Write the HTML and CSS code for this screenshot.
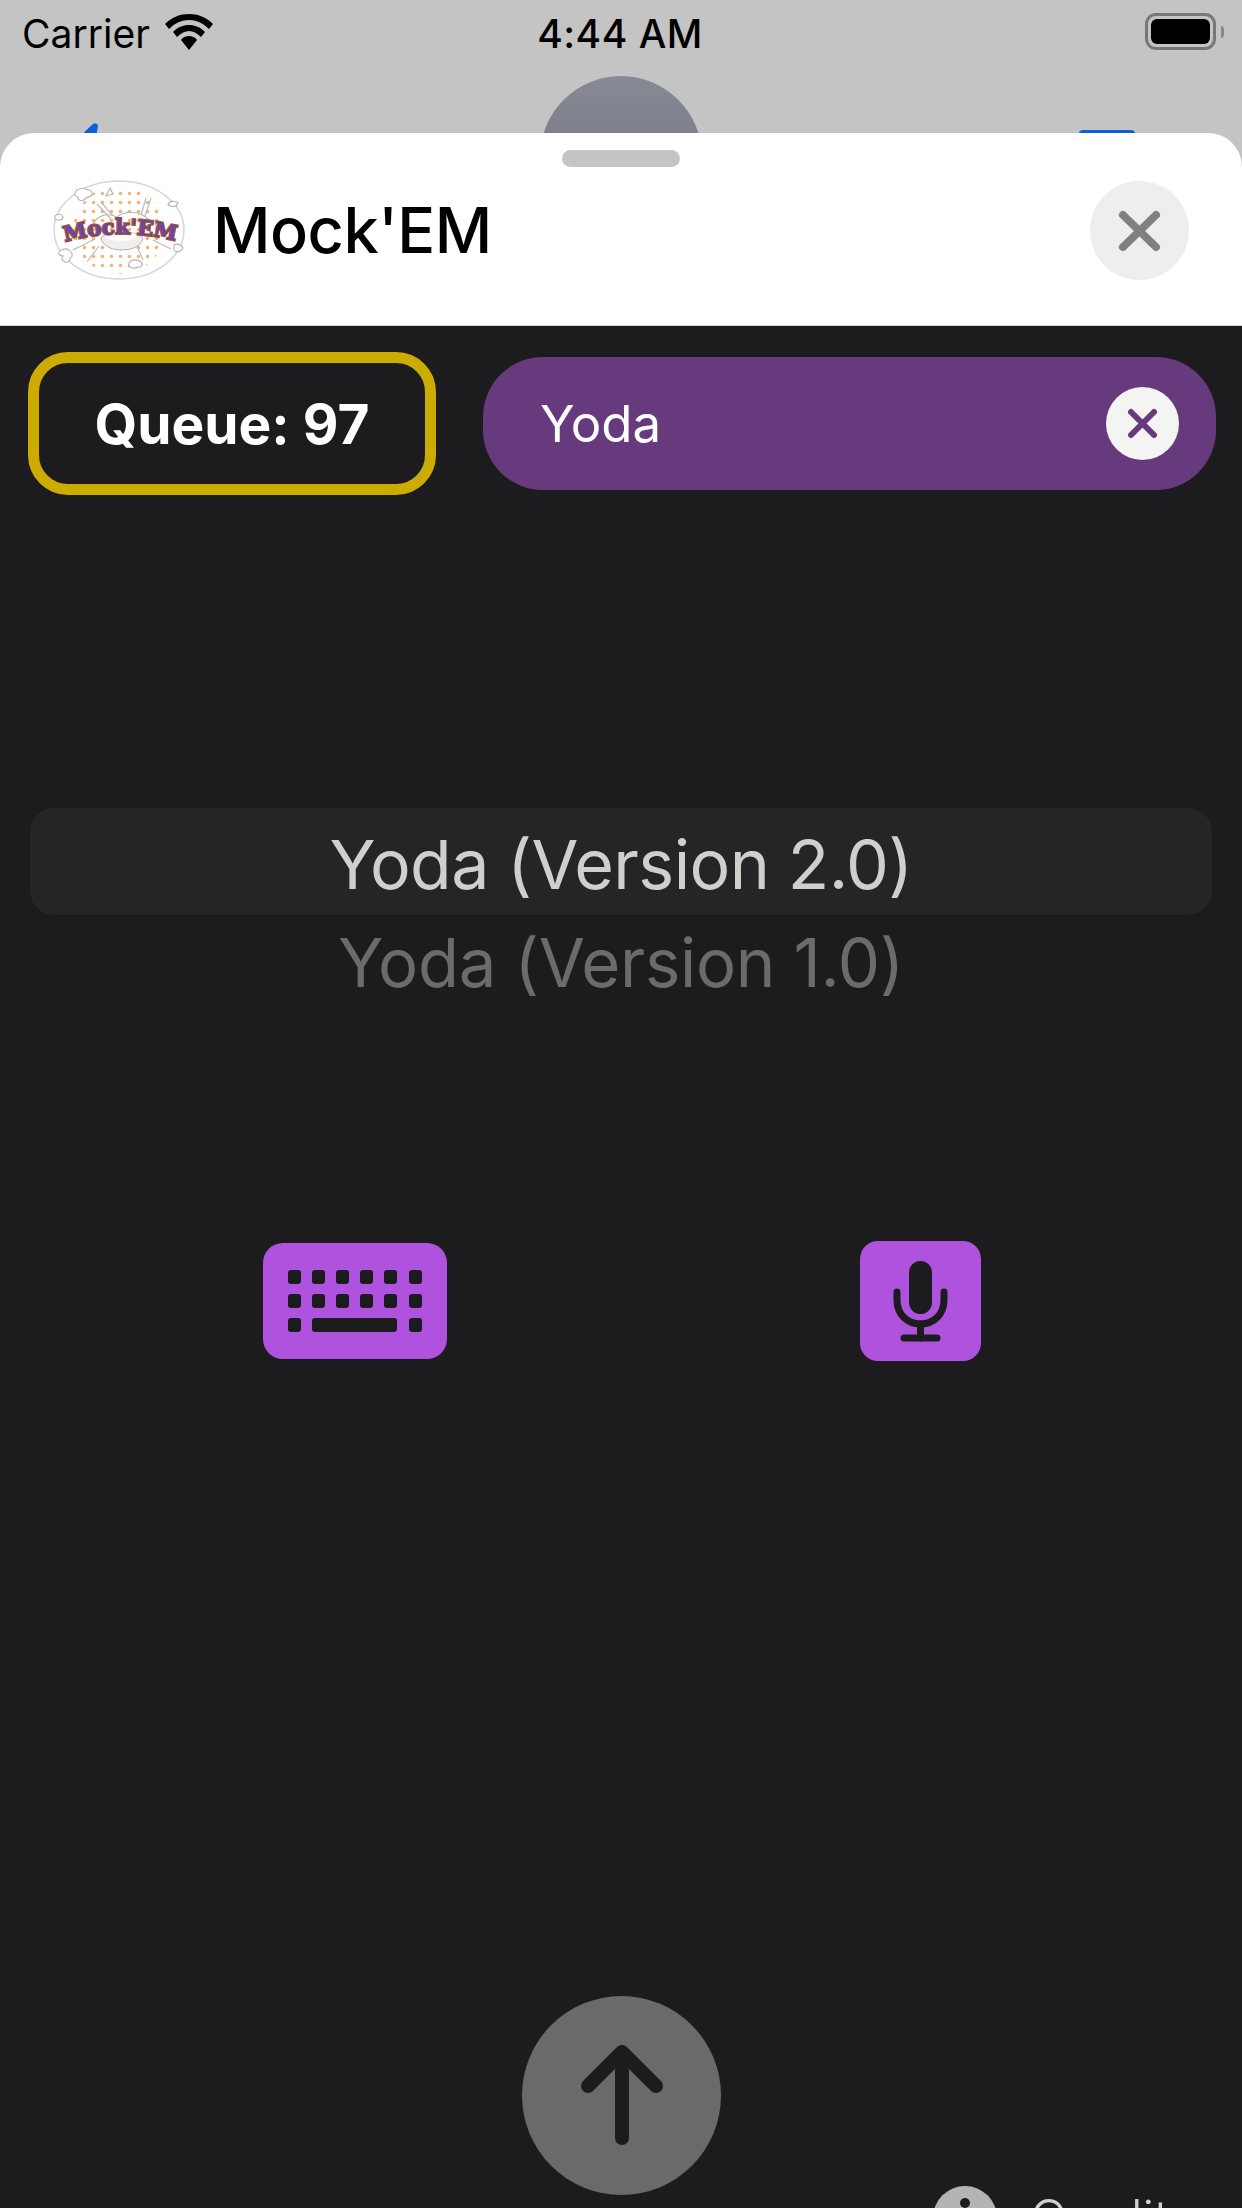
FILE: index.html
```html
<!DOCTYPE html>
<html lang="en">
<head>
<meta charset="utf-8">
<title>Mock'EM</title>
<link rel="stylesheet" href="styles.css">
</head>
<body>
<div class="screen">
  <div class="backdrop">
    <div class="avatar"></div>
    <svg class="back-chevron" viewBox="0 0 24 14"><path d="M2 14 Q8 7 15 1 Q19 -1 20 3 L18 14 Z"/></svg>
    <div class="blue-tab"></div>
  </div>
  <header class="status">
    <div class="status-left">
      <span>Carrier</span>
      <svg class="wifi" viewBox="0 0 48 36"><path d="M24 0C33 0 41 3 48 10L44 15C38 9 31 6 24 6S10 9 4 15L0 10C7 3 15 0 24 0Z"/><path d="M24 11C30 11 35 13 40 18L36 23C32 19 28 17 24 17S16 19 12 23L8 18C13 13 18 11 24 11Z"/><path d="M24 22C27 22 30 23 32 26L24 36L16 26C18 23 21 22 24 22Z"/></svg>
    </div>
    <div class="clock">4:44 AM</div>
    <div class="battery"><div class="battery-shell"><div class="battery-fill"></div></div><div class="battery-cap"></div></div>
  </header>
  <section class="sheet">
    <div class="grabber"></div>
    <div class="sheet-row">
      <svg class="logo" viewBox="0 0 132 100">
        <defs>
          <pattern id="dots" width="9" height="9" patternUnits="userSpaceOnUse"><circle cx="4.500" cy="4.500" r="1.800" fill="#f0a055"/></pattern>
          <path id="arc" d="M12 62Q67 46 126 62"/>
        </defs>
        <ellipse cx="66" cy="50" rx="65" ry="49" fill="#fff" stroke="#d6d6d6" stroke-width="1.500"/>
        <ellipse cx="66" cy="50" rx="46" ry="44" fill="url(#dots)" opacity=".8"/>
        <g fill="#fff" stroke="#b4b4b4" stroke-width="1.100">
          <path d="M22 13c1-5 10-6 12-3 4-1 7 3 4 6-2 2-5 0-6 3-3 3-8 1-7-2-3-1-4-3-3-4Z"/>
          <path d="M57 8l3 6-7 2Z"/>
          <path d="M115 25c1-4 7-5 10-2-1 3-4 5-10 2Z"/>
          <path d="M2 36c3-3 7-2 8 1 0 3-5 4-8 2Z"/>
          <path d="M6 72c3-4 9-4 11-1 3 2 3 6 0 7 0 4-4 6-6 3-3 0-2-4-1-5-3 0-5-2-4-4Z"/>
          <path d="M76 83c2-4 9-4 12-1 3 2 0 6-3 5-3 2-8 1-9-1Z"/>
          <path d="M121 65c3-2 8 0 9 3-2 4-7 5-9 2Z"/>
        </g>
        <g fill="none" stroke="#bcbcbc" stroke-width="1.200">
          <path d="M44 24l14 15M48 22l12 14M98 18l-6 18M93 18l-5 17M20 70l22-11M100 60l18 9M34 82l12-16M84 66l6 14"/>
          <path d="M40 46c2-10 14-14 24-9 8-7 24-6 32 3 6 2 8 5 7 8"/>
        </g>
        <path d="M48 58c5-6 16-7 22-4 8-3 16-1 20 5-3 8-12 11-22 11s-19-5-20-12Z" fill="#efefef" stroke="#b0b0b0" stroke-width="1"/>
        <ellipse cx="68" cy="56" rx="16" ry="5" fill="#fff"/>
        <text class="logo-word"><textPath href="#arc" textLength="112" lengthAdjust="spacingAndGlyphs">Mock'EM</textPath></text>
      </svg>
      <h1 class="title">Mock'EM</h1>
      <button class="close">
        <svg viewBox="0 0 99 99"><path d="M33 34 66 66M66 34 33 66"/></svg>
      </button>
    </div>
  </section>
  <main class="content">
    <div class="top-row">
      <div class="queue">Queue: 97</div>
      <div class="pill">
        <span>Yoda</span>
        <span class="pill-x"><svg viewBox="0 0 73 73"><path d="M25 25 48 48M48 25 25 48"/></svg></span>
      </div>
    </div>
    <div class="picker">
      <div class="picker-selected">Yoda (Version 2.0)</div>
      <div class="picker-next">Yoda (Version 1.0)</div>
    </div>
    <div class="inputs">
      <svg class="kbd" viewBox="0 0 184 116">
        <rect width="184" height="116" rx="20" fill="#af52de"/>
        <g fill="#1c1c1e">
          <rect x="25" y="27" width="13" height="14" rx="3"/><rect x="49" y="27" width="13" height="14" rx="3"/><rect x="73" y="27" width="13" height="14" rx="3"/><rect x="97" y="27" width="13" height="14" rx="3"/><rect x="121" y="27" width="13" height="14" rx="3"/><rect x="146" y="27" width="13" height="14" rx="3"/>
          <rect x="25" y="51" width="13" height="14" rx="3"/><rect x="49" y="51" width="13" height="14" rx="3"/><rect x="73" y="51" width="13" height="14" rx="3"/><rect x="97" y="51" width="13" height="14" rx="3"/><rect x="121" y="51" width="13" height="14" rx="3"/><rect x="146" y="51" width="13" height="14" rx="3"/>
          <rect x="25" y="75" width="13" height="14" rx="3"/><rect x="49" y="75" width="85" height="14" rx="3"/><rect x="146" y="75" width="13" height="14" rx="3"/>
        </g>
      </svg>
      <svg class="mic" viewBox="0 0 121 120">
        <rect width="121" height="120" rx="18" fill="#af52de"/>
        <rect x="49" y="20" width="23" height="53" rx="11.500" fill="#1c1c1e"/>
        <g fill="none" stroke="#1c1c1e" stroke-width="7" stroke-linecap="round">
          <path d="M37 51V59C37 73 47 83 60.500 83S84 73 84 59V51"/>
          <path d="M60.500 83V97"/>
          <path d="M44 97H77"/>
        </g>
      </svg>
    </div>
    <div class="send-wrap">
      <button class="send">
        <svg viewBox="0 0 199 199"><path d="M100 56V142M66 90 100 56 134 90"/></svg>
      </button>
    </div>
    <div class="credits">
      <span class="info"><span class="info-dot"></span></span>
      <span class="credits-text">Credits</span>
    </div>
  </main>
</div>
</body>
</html>
```
FILE: styles.css
```css
* { box-sizing: border-box; }
html, body { margin: 0; padding: 0; }
body { width: 1242px; height: 2208px; overflow: hidden; background: #1c1c1e; font-family: Inter, "Liberation Sans", sans-serif; }
.screen { position: relative; width: 1242px; height: 2208px; display: flex; flex-direction: column; overflow: hidden; background: #1c1c1e; }

.backdrop { position: absolute; left: 0; top: 0; width: 1242px; height: 200px; background: #c4c4c4; }
.avatar { position: absolute; left: 540px; top: 76px; width: 162px; height: 162px; border-radius: 50%; background: linear-gradient(#878a95, #6d707e); }
.back-chevron { position: absolute; left: 78px; top: 123px; width: 24px; height: 14px; fill: #0a60d8; }
.blue-tab { position: absolute; left: 1079px; top: 130px; width: 56px; height: 10px; border-radius: 4px; background: #0a60d8; }

.status { position: relative; height: 133px; flex: none; display: grid; grid-template-columns: 1fr auto 1fr; align-items: start; padding: 12px 18px 0 22px; color: #000; font-size: 39px; line-height: 44px; }
.status-left { display: flex; align-items: center; gap: 15px; }
.wifi { width: 48px; height: 36px; fill: #000; margin-top: -4px; }
.clock { font-weight: 500; font-size: 39px; letter-spacing: 0.5px; position: relative; left: -3px; }
.battery { justify-self: end; display: flex; align-items: center; gap: 5px; margin-top: 1px; }
.battery-shell { width: 71px; height: 37px; border: 3px solid #777; border-radius: 11px; padding: 3px; }
.battery-fill { width: 100%; height: 100%; border-radius: 6px; background: #000; }
.battery-cap { width: 3px; height: 12px; border-radius: 0 3px 3px 0; background: #888; }

.sheet { position: relative; flex: none; height: 193px; background: #fff; border-radius: 34px 34px 0 0; padding-top: 17px; border-bottom: 1px solid #d4d4d4; }
.grabber { width: 118px; height: 17px; margin: 0 auto; border-radius: 9px; background: #c4c4c6; }
.sheet-row { display: flex; align-items: center; padding: 13px 53px 0; }
.logo { width: 132px; height: 100px; flex: none; }
.logo-word { font-family: "DejaVu Serif", serif; font-size: 21px; font-weight: 700; fill: #7343a3; stroke: #9a5a2a; stroke-width: 2px; paint-order: stroke; }
.title { margin: 0 0 0 28px; flex: 1; font-size: 63px; font-weight: 500; line-height: 100px; color: #000; letter-spacing: -0.5px; }
.close { width: 99px; height: 99px; padding: 0; border: 0; border-radius: 50%; background: #eee; display: block; flex: none; }
.close svg { display: block; width: 99px; height: 99px; fill: none; stroke: #808084; stroke-width: 8; stroke-linecap: round; }

.content { flex: 1; position: relative; display: flex; flex-direction: column; background: #1c1c1e; }
.top-row { display: flex; align-items: center; padding: 26px 26px 0 28px; gap: 47px; }
.queue { width: 408px; height: 143px; flex: none; border: 11px solid #ccac00; border-radius: 40px; display: flex; align-items: center; justify-content: center; color: #fff; font-weight: 700; font-size: 55px; background: #1c1c1e; }
.pill { flex: 1; height: 133px; border-radius: 60px; background: #67397d; color: #fff; font-size: 51px; display: flex; align-items: center; justify-content: space-between; padding: 0 37px 0 57px; }
.pill-x { width: 73px; height: 73px; border-radius: 50%; background: #f4f4f2; display: block; }
.pill-x svg { display: block; width: 73px; height: 73px; fill: none; stroke: #67397d; stroke-width: 6; stroke-linecap: round; }

.picker { margin: 313px 30px 0; display: flex; flex-direction: column; align-items: center; }
.picker-selected { width: 100%; height: 107px; padding-top: 3px; border-radius: 24px; background: #252527; color: #cfcfcb; font-size: 68px; font-weight: 400; letter-spacing: -0.6px; line-height: 107px; text-align: center; }
.picker-next { color: #6b6b69; font-size: 67px; font-weight: 400; letter-spacing: -0.3px; line-height: 96px; text-align: center; }

.inputs { display: flex; align-items: center; margin-top: 230px; padding-left: 263px; gap: 413px; }
.kbd { width: 184px; height: 116px; flex: none; display: block; }
.mic { width: 121px; height: 120px; flex: none; display: block; }

.send-wrap { display: flex; justify-content: center; margin-top: 635px; }
.send { width: 199px; height: 199px; border: 0; padding: 0; border-radius: 50%; background: #6a6a6a; flex: none; }
.send svg { display: block; width: 199px; height: 199px; fill: none; stroke: #1c1c1e; stroke-width: 14; stroke-linecap: round; stroke-linejoin: round; }

.credits { position: absolute; left: 933px; top: 1860px; display: flex; align-items: center; gap: 33px; color: #b4b4b4; }
.info { width: 64px; height: 64px; border-radius: 50%; background: #b4b4b4; position: relative; flex: none; display: block; }
.info-dot { position: absolute; left: 27px; top: 12px; width: 10px; height: 10px; border-radius: 50%; background: #1c1c1e; }
.credits-text { font-size: 50px; line-height: 64px; color: #d0d0d0; font-weight: 300; }
```
